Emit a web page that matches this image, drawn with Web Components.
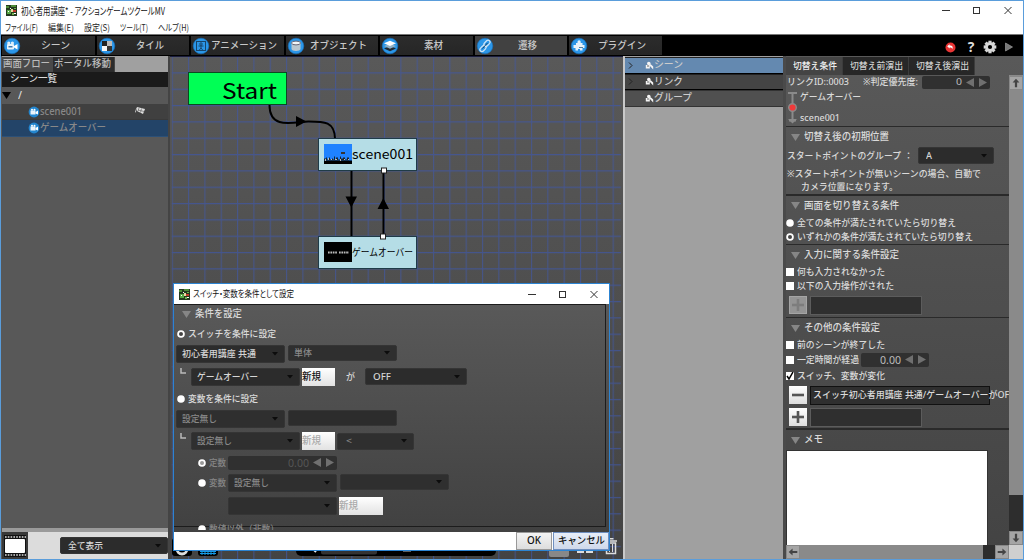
<!DOCTYPE html>
<html lang="ja">
<head>
<meta charset="utf-8">
<title>初心者用講座* - アクションゲームツクールMV</title>
<style>
    html, body { margin: 0; height: 100%; overflow: hidden; }
    body { font: 500 9.3px/1 "Noto Sans", "Noto Sans CJK JP", sans-serif; color: #dcdcdc; }
    .col { display: flex; flex-direction: column; }
    .head { font-size: 9.8px; }
</style>
</head>
<body>

<app-window>
    <title-bar slot="title">
        <fit-label w="144">初心者用講座* - アクションゲームツクールMV</fit-label>
    </title-bar>

    <menu-bar slot="menu">
        <fit-label w="33">ファイル(F)</fit-label>
        <fit-label w="26">編集(E)</fit-label>
        <fit-label w="26">設定(S)</fit-label>
        <fit-label w="28">ツール(T)</fit-label>
        <fit-label w="31">ヘルプ(H)</fit-label>
    </menu-bar>

    <tool-bar slot="tools">
        <tool-tab icon="scene"><fit-label w="29">シーン</fit-label></tool-tab>
        <tool-tab icon="tile"><fit-label w="28">タイル</fit-label></tool-tab>
        <tool-tab icon="anim"><fit-label w="66">アニメーション</fit-label></tool-tab>
        <tool-tab icon="object"><fit-label w="57">オブジェクト</fit-label></tool-tab>
        <tool-tab icon="layers"><fit-label w="19">素材</fit-label></tool-tab>
        <tool-tab icon="link" active><fit-label w="19">遷移</fit-label></tool-tab>
        <tool-tab icon="plugin"><fit-label w="48">プラグイン</fit-label></tool-tab>
    </tool-bar>

    <scene-tree slot="left">
        <fit-label slot="tab1" w="47">画面フロー</fit-label>
        <fit-label slot="tab2" w="57">ポータル移動</fit-label>
        <fit-label slot="head" w="47">シーン一覧</fit-label>
        <tree-row root><fit-label w="4">/</fit-label></tree-row>
        <tree-row flag><fit-label w="42">scene001</fit-label></tree-row>
        <tree-row selected><fit-label w="66">ゲームオーバー</fit-label></tree-row>
        <ui-select slot="filter" style="--w:108px;--h:17px;--pad:7px"><fit-label w="35">全て表示</fit-label></ui-select>
    </scene-tree>

    <flow-canvas slot="canvas">
        <flow-node kind="start" style="left:17.500px;top:16px"><fit-label w="55">Start</fit-label></flow-node>
        <flow-node kind="scene" style="left:148px;top:81.500px"><fit-label w="61">scene001</fit-label></flow-node>
        <flow-node kind="over" style="left:148px;top:179.500px"><fit-label w="61">ゲームオーバー</fit-label></flow-node>
    </flow-canvas>

    <link-list slot="list">
        <link-row selected arrow><fit-label w="29">シーン</fit-label></link-row>
        <link-row arrow><fit-label w="29">リンク</fit-label></link-row>
        <link-row plain><fit-label w="38">グループ</fit-label></link-row>
    </link-list>

    <prop-panel slot="props">
        <fit-label slot="tab1" w="44">切替え条件</fit-label>
        <fit-label slot="tab2" w="53">切替え前演出</fit-label>
        <fit-label slot="tab3" w="53">切替え後演出</fit-label>

        <ui-row h="14">
            <fit-label w="62" style="margin-left:1px">リンクID::0003</fit-label>
            <fit-label w="55" style="margin-left:14px">※判定優先度:</fit-label>
            <ui-spin style="--w:68px;--h:13px;margin-left:4px"><fit-label w="6">0</fit-label></ui-spin>
        </ui-row>
        <ui-row h="37">
            <link-mark></link-mark>
            <div class="col" style="margin-left:3px">
                <ui-row h="21"><fit-label w="61">ゲームオーバー</fit-label></ui-row>
                <ui-row h="21"><fit-label w="40">scene001</fit-label></ui-row>
            </div>
        </ui-row>

        <ui-section line="1" h="20">
            <fit-label slot="head" w="85">切替え後の初期位置</fit-label>
            <ui-row h="17">
                <fit-label w="114" style="margin-left:1px">スタートポイントのグループ</fit-label>
                <fit-label w="9" style="margin-left:3px">：</fit-label>
                <ui-select style="--w:76px;--h:17px;--pad:7px;margin-left:5px"><fit-label w="6">A</fit-label></ui-select>
            </ui-row>
            <ui-row h="4"></ui-row>
            <ui-row h="12"><fit-label w="194" style="margin-left:1px">※スタートポイントが無いシーンの場合、自動で</fit-label></ui-row>
            <ui-row h="14"><fit-label w="97" style="margin-left:15px">カメラ位置になります。</fit-label></ui-row>
        </ui-section>

        <ui-section line="2" h="19">
            <fit-label slot="head" w="95">画面を切り替える条件</fit-label>
            <ui-row h="15"><ui-radio on></ui-radio><fit-label w="159">全ての条件が満たされていたら切り替え</fit-label></ui-row>
            <ui-row h="14"><ui-radio></ui-radio><fit-label w="176">いずれかの条件が満たされていたら切り替え</fit-label></ui-row>
        </ui-section>

        <ui-section line="1" h="20">
            <fit-label slot="head" w="95">入力に関する条件設定</fit-label>
            <ui-row h="13"><ui-check></ui-check><fit-label w="88">何も入力されなかった</fit-label></ui-row>
            <ui-row h="15"><ui-check></ui-check><fit-label w="97">以下の入力操作がされた</fit-label></ui-row>
            <ui-row h="24"><sign-button sign="plus" disabled></sign-button><ui-field style="--w:112px"></ui-field></ui-row>
        </ui-section>

        <ui-section line="1" h="20">
            <fit-label slot="head" w="76">その他の条件設定</fit-label>
            <ui-row h="14"><ui-check></ui-check><fit-label w="88">前のシーンが終了した</fit-label></ui-row>
            <ui-row h="15"><ui-check></ui-check><fit-label w="62">一定時間が経過</fit-label>
                <ui-spin style="--w:68px;--h:14px;margin-left:2px"><fit-label w="21" style="font-size:10px">0.00</fit-label></ui-spin></ui-row>
            <ui-row h="17"><ui-check on></ui-check><fit-label w="88">スイッチ、変数が変化</fit-label></ui-row>
            <ui-row h="22"><sign-button sign="minus"></sign-button><ui-field dark style="--w:180px"><fit-label w="201">スイッチ初心者用講座 共通/ゲームオーバーがOFF</fit-label></ui-field></ui-row>
            <ui-row h="22"><sign-button sign="plus"></sign-button><ui-field style="--w:112px"></ui-field></ui-row>
        </ui-section>

        <ui-section line="2" h="20">
            <fit-label slot="head" w="19">メモ</fit-label>
            <memo-box></memo-box>
        </ui-section>
    </prop-panel>

    <modal-dialog slot="dialog">
        <fit-label slot="title" w="101">スイッチ・変数を条件として設定</fit-label>

        <ui-row h="20"><tri-mark style="margin:0 4px 0 8px"></tri-mark><fit-label class="head" w="47">条件を設定</fit-label></ui-row>
        <ui-row h="20"><ui-radio style="margin-left:3px"></ui-radio><fit-label w="88">スイッチを条件に設定</fit-label></ui-row>
        <ui-row h="20">
            <ui-select style="--w:109px;margin-left:2px"><fit-label w="74">初心者用講座 共通</fit-label></ui-select>
            <ui-select dim style="--w:109px;--h:16px;margin:-2px 0 0 3px"><fit-label w="18">単体</fit-label></ui-select>
        </ui-row>
        <ui-row h="25">
            <corner-mark></corner-mark>
            <ui-select style="--w:109px"><fit-label w="61">ゲームオーバー</fit-label></ui-select>
            <ui-button style="--w:33px"><fit-label w="19">新規</fit-label></ui-button>
            <fit-label w="9" style="margin-left:11px">が</fit-label>
            <ui-select style="--w:102px;--h:17px;--pad:7px;margin-left:10px"><fit-label w="18">OFF</fit-label></ui-select>
        </ui-row>
        <ui-row h="20"><ui-radio on style="margin-left:3px"></ui-radio><fit-label w="70">変数を条件に設定</fit-label></ui-row>
        <ui-row h="20">
            <ui-select dim style="--w:109px;margin-left:2px"><fit-label w="35">設定無し</fit-label></ui-select>
            <ui-select blank style="--w:109px;--h:16px;margin:-2px 0 0 3px"></ui-select>
        </ui-row>
        <ui-row h="24">
            <corner-mark></corner-mark>
            <ui-select dim style="--w:109px"><fit-label w="35">設定無し</fit-label></ui-select>
            <ui-button disabled style="--w:33px"><fit-label w="19">新規</fit-label></ui-button>
            <ui-select dim style="--w:77px;--h:17px;--pad:8px;margin-left:2px"><fit-label w="6">&lt;</fit-label></ui-select>
        </ui-row>
        <ui-row h="19">
            <ui-radio half style="margin-left:24px"></ui-radio><fit-label w="17" style="color:#858585">定数</fit-label>
            <ui-spin dim style="--w:109px;--h:14px;margin-left:2px"><fit-label w="21" style="font-size:10px">0.00</fit-label></ui-spin>
        </ui-row>
        <ui-row h="22">
            <ui-radio on style="margin-left:24px"></ui-radio><fit-label w="17" style="color:#858585">変数</fit-label>
            <ui-select dim style="--w:109px;margin-left:2px"><fit-label w="35">設定無し</fit-label></ui-select>
            <ui-select dim style="--w:109px;--h:16px;margin:-2px 0 0 3px"></ui-select>
        </ui-row>
        <ui-row h="24">
            <ui-select dim style="--w:109px;margin-left:54px"></ui-select>
            <ui-button disabled style="--w:44px"><fit-label w="19">新規</fit-label></ui-button>
        </ui-row>
        <ui-row h="22"><ui-radio on style="margin-left:24px"></ui-radio><fit-label w="70" style="color:#858585">数値以外（非数）</fit-label></ui-row>

        <dialog-button slot="actions" style="--w:36px"><fit-label w="14">OK</fit-label></dialog-button>
        <dialog-button slot="actions" focused style="--w:56px"><fit-label w="47">キャンセル</fit-label></dialog-button>
    </modal-dialog>
</app-window>

<script>
    // Registers an element whose shadow root is cloned from one template
    function define(name, html, ready) {
        const template = document.createElement("template");
        template.innerHTML = html;
        customElements.define(name, class extends HTMLElement {
            constructor() {
                super();
                this.attachShadow({mode: "open"});
                this.shadowRoot.append(template.content.cloneNode(true));
            }
            connectedCallback() {
                if (ready) ready(this, this.shadowRoot);
            }
        });
    }

    const appIcon = `
        <svg width="11" height="11" viewBox="0 0 11 11">
            <rect width="11" height="11" fill="#24391f"/>
            <path d="M0 1h3v2h-3zM5 0h5v2h-5z" fill="#4d8c37"/>
            <path d="M1 5h4v4h-4z" fill="#58a845"/><path d="M5 4h2v3h-2z" fill="#e8d9a0"/>
            <path d="M7 5h3v2h-3z" fill="#c33c2e"/><path d="M4 3h1v1h-1zM2 6h1v1h-1zM8 8h2v1h-2z" fill="#fff"/>
            <path d="M6 8h2v2h-2zM8 3h2v1h-2z" fill="#6fb34c"/>
        </svg>`;

    const windowButtons = `
        <svg class="btns" width="71" height="9" viewBox="0 0 71 9" fill="none" stroke="#333" stroke-width="1">
            <path d="M0 4.500h8"/><rect x="31.500" y="1.500" width="6" height="6"/><path d="M62.500 1l7 7M69.500 1l-7 7"/>
        </svg>`;

    /* ---------- text ---------- */

    // One line of text squeezed or stretched to the width in [w]
    define("fit-label", `
        <style>
            :host { display: inline-block; flex: none; height: 14px; line-height: 14px; white-space: nowrap; }
            span { display: inline-block; transform-origin: 0 50%; line-height: 14px; vertical-align: top; }
        </style>
        <span><slot></slot></span>
    `, (el, root) => {
        const w = Number(el.getAttribute("w"));
        const span = root.querySelector("span");
        el.style.width = `${w}px`;
        const fit = () => {
            span.style.transform = "";
            const natural = span.getBoundingClientRect().width;
            if (natural) span.style.transform = `scaleX(${w / natural})`;
        };
        fit();
        root.querySelector("slot").addEventListener("slotchange", fit);
        window.addEventListener("load", fit);
    });

    /* ---------- window frame ---------- */

    define("app-window", `
        <style>
            :host {
                display: grid; box-sizing: border-box; width: 1024px; height: 560px;
                grid-template-rows: 20px 13px 22px 1fr;
                border: 1px solid #5a9ddb; background: #fff; position: relative; overflow: hidden;
            }
            .main {
                display: grid; grid-template-columns: 169px 453px 163px 1fr;
                min-height: 0; background: #474747;
            }
        </style>
        <slot name="title"></slot>
        <slot name="menu"></slot>
        <slot name="tools"></slot>
        <div class="main">
            <slot name="left"></slot>
            <slot name="canvas"></slot>
            <slot name="list"></slot>
            <slot name="props"></slot>
        </div>
        <slot name="dialog"></slot>
    `);

    define("title-bar", `
        <style>
            :host { display: flex; align-items: center; padding: 0 10px 1px 5px; color: #111; font: 10px "Noto Sans CJK JP", sans-serif; font-feature-settings: "palt"; }
            .t { margin-left: 4px; flex: 1; }
        </style>
        ${appIcon}<div class="t"><slot></slot></div>${windowButtons}
    `);

    define("menu-bar", `
        <style>
            :host { display: flex; gap: 10px; align-items: center; padding-left: 4px; color: #222; font: 9px "Noto Sans CJK JP", sans-serif; font-feature-settings: "palt"; }
        </style>
        <slot></slot>
    `);

    define("tool-bar", `
        <style>
            :host { display: flex; align-items: center; gap: 2px; background: #000; padding-left: 1px; border-top: 1px solid #777; box-sizing: border-box; }
            .right { margin-left: auto; margin-top: 3px; display: flex; align-items: center; padding-right: 9px; }
            b { font: bold 14px/14px "Open Sans", sans-serif; color: #ddd; margin: 0 8px 0 11px; width: 8px; text-align: center; }
        </style>
        <slot></slot>
        <div class="right">
            <svg width="11" height="11" viewBox="0 0 11 11">
                <circle cx="5.500" cy="5.500" r="5" fill="#e93434"/>
                <path d="M2.200 4.200l2.400-2v1.300c2.800 0 3.800 1.400 2.600 3.800 0-1.600-.9-2-2.600-1.900v1.200z" fill="#fff"/>
            </svg>
            <b>?</b>
            <svg width="14" height="14" viewBox="-7 -7 14 14">
                <g fill="#d8d8d8">
                    <circle r="4.800"/>
                    <rect x="-1.600" y="-6.300" width="3.200" height="12.600"/><rect x="-6.300" y="-1.600" width="12.600" height="3.200"/>
                    <rect x="-1.600" y="-6.300" width="3.200" height="12.600" transform="rotate(45)"/>
                    <rect x="-1.600" y="-6.300" width="3.200" height="12.600" transform="rotate(-45)"/>
                </g>
                <circle r="2.100" fill="#000"/>
            </svg>
            <svg width="10" height="10" viewBox="0 0 10 10" style="margin-left:7px">
                <path d="M1.500 1v8l7-4z" fill="#777" stroke="#999" stroke-width=".7"/>
            </svg>
        </div>
    `);

    const toolIcons = {
        scene: `<rect x="3" y="6" width="7" height="5.500" rx="1" fill="#e9f4fc"/><path d="M10 8l3.500-2v5.500l-3.500-2z" fill="#fff"/><circle cx="4.800" cy="5" r="1.600" fill="#dceefa"/><circle cx="8.400" cy="5" r="1.600" fill="#dceefa"/><path d="M4.500 8h4v1.500h-4z" fill="#3c7bb0"/>`,
        tile: `<rect x="3" y="3" width="5" height="5" fill="#222"/><rect x="8" y="3" width="5" height="5" fill="#bbb"/><rect x="3" y="8" width="5" height="5" fill="#f6f6f6"/><rect x="8" y="8" width="5" height="5" fill="#333"/>`,
        anim: `<g fill="none" stroke="#17456b"><rect x="3.500" y="3.500" width="9" height="9"/><circle cx="8" cy="6" r="1.200"/><path d="M8 7v3M5.500 8h5M8 10l-2 2.500M8 10l2 2.500"/></g>`,
        object: `<path d="M3.500 5v6c0 2.600 9 2.600 9 0v-6z" fill="#b9c7d0"/><ellipse cx="8" cy="5" rx="4.500" ry="1.900" fill="#f1f6f8" stroke="#667"/>`,
        layers: `<path d="M8 8l6 2.500-6 2.700-6-2.700z" fill="#222b33"/><path d="M8 5.500l6 2.500-6 2.700-6-2.700z" fill="#8fb0c6"/><path d="M8 2.700l6 2.500-6 2.700-6-2.700z" fill="#fff"/>`,
        link: `<g fill="none" stroke="#cfe4f5" stroke-width="1.300"><rect x="6.500" y="3.300" width="7" height="4" rx="2" transform="rotate(-45 10 5.300)"/><rect x="2.500" y="8.500" width="7" height="4" rx="2" transform="rotate(-45 6 10.500)"/></g><path d="M5.500 10.500l5-5.500" stroke="#17456b"/>`,
        plugin: `<path d="M2.500 7h2.500v-2h1.500v-1.200a1.600 1.600 0 0 1 3.200 0v1.200h1.800v2h2v3h-2v2.500h-2.500v-1.500h-2v1.500h-2.500v-2.500h-2z" fill="#e6f1fa"/><path d="M8 9h4v1h-4z" fill="#557c99"/>`
    };

    define("tool-tab", `
        <style>
            :host {
                display: flex; align-items: center; box-sizing: border-box; width: 92.500px; height: 19px; padding-left: 1px;
                background: linear-gradient(#2c2c2c, #262626); color: #c8c8c8; font-size: 9.800px;
            }
            :host([active]) { background: #414141; }
            svg { flex: none; }
            div { flex: 1; display: flex; justify-content: center; padding-right: 5px; }
        </style>
        <svg width="18" height="18" viewBox="-1 -1 18 18"></svg>
        <div><slot></slot></div>
    `, (el, root) => {
        root.querySelector("svg").innerHTML =
            `<circle cx="8" cy="8" r="7.800" fill="#2b96e8" stroke="#1670bd" stroke-width=".6"/>${toolIcons[el.getAttribute("icon")]}`;
    });

    /* ---------- scene tree ---------- */

    define("scene-tree", `
        <style>
            :host { display: flex; flex-direction: column; border-right: 2px solid #444; padding-left: 1px; background: #585858; min-height: 0; }
            .tabs { display: flex; background: #a0a0a0; height: 15px; padding-top: 1px; font-size: 9.800px; color: #bbb; }
            .tabs div { box-sizing: border-box; padding-left: 1px; }
            .t1 { width: 51px; background: #4a4a4a; }
            .t2 { width: 62px; background: #2c2c2c; border-right: 1px solid #444; }
            .head { height: 15px; background: #1a1a1a; padding-left: 8px; font-size: 9.800px; }
            .body { flex: 1; }
            .foot { height: 27px; display: flex; border-top: 4px solid #9a9a9a; background: #dcdcdc; align-items: center; justify-content: space-between; }
            .film { align-self: stretch; width: 26px; background: #383838; display: grid; place-items: center; }
        </style>
        <div class="tabs">
            <div class="t1"><slot name="tab1"></slot></div>
            <div class="t2"><slot name="tab2"></slot></div>
        </div>
        <div class="head"><slot name="head"></slot></div>
        <div class="body"><slot></slot></div>
        <div class="foot">
            <div class="film">
                <svg width="24" height="24" viewBox="0 0 24 24">
                    <rect x="1" y="1" width="22" height="22" fill="#111"/>
                    <rect x="2" y="5" width="20" height="14" rx="1" fill="#fff"/>
                    <path d="M2 3h21M2 21h21" stroke="#ddd" stroke-width="1.500" stroke-dasharray="1.600 1.200"/>
                </svg>
            </div>
            <slot name="filter"></slot>
        </div>
    `);

    define("tree-row", `
        <style>
            :host { display: flex; align-items: center; height: 16px; box-sizing: border-box; padding-left: 26px; background: #404040; color: #888; font-size: 9.800px; border-bottom: 1px solid #3a3a3a; }
            :host([root]) { background: #585858; border: 0; padding-left: 0; height: 17px; color: #ddd; }
            :host([selected]) { background: #234468; height: 17px; border-color: #2c5077; }
            .tri, .flag, :host([root]) .ball { display: none; }
            :host([root]) .tri { display: block; margin-right: 7px; }
            :host([flag]) .flag { display: block; margin: -3px 0 0 53px; }
        </style>
        <svg class="tri" width="9" height="7"><path d="M0 0h9l-4.500 7z" fill="#000"/></svg>
        <svg class="ball" width="12" height="12" viewBox="0 0 12 12">
            <circle cx="6" cy="6" r="5.400" fill="#2386cf"/>
            <rect x="2.500" y="4.500" width="5" height="4" fill="#eaf4fb"/><path d="M7.500 6l2.500-1.500v4l-2.500-1z" fill="#fff"/>
            <circle cx="4" cy="3.700" r="1" fill="#fff"/><circle cx="6.500" cy="3.700" r="1" fill="#fff"/>
        </svg>
        <slot></slot>
        <svg class="flag" width="10" height="9" viewBox="0 0 10 9">
            <path d="M2 1l8 2-2 5-6-3z" fill="#ddd"/><path d="M4 2l-1 3M6.500 2.500l-1 4M3 4l6 1.500" stroke="#555" stroke-width=".6"/>
            <path d="M2 1.500l-1.800 5" stroke="#bbb"/>
        </svg>
    `);

    /* ---------- flow canvas ---------- */

    define("flow-canvas", `
        <style>
            :host { display: block; position: relative; overflow: hidden; background: linear-gradient(#595959, #434343); }
            svg { position: absolute; left: 0; top: 0; }
        </style>
        <svg width="453" height="503" viewBox="170 56 453 503">
            <defs>
                <pattern id="grid" x="171.700" y="56" width="16.330" height="16.330" patternUnits="userSpaceOnUse">
                    <path d="M.6 0v16.330M0 .6h16.330" stroke="#4057a3" stroke-width="1" fill="none" opacity=".75"/>
                </pattern>
            </defs>
            <rect x="171.700" y="56" width="449" height="503" fill="url(#grid)"/>
            <path d="M170 56.500h453" stroke="#1b1d3c"/>
            <g fill="none" stroke="#000" stroke-width="2">
                <path d="M269.500 105c0 26 26 16.500 39 16.500c16 0 26 0 26.500 17"/>
                <path d="M351.500 170v66M383.500 170v66"/>
            </g>
            <path d="M296 116l10.500 5.500-10.500 5.500zM345.500 196.500h11.500l-5.700 11zM377.500 209h11.500l-5.700-11z"/>
            <g>
                <rect x="172" y="538" width="20" height="18" rx="3"/>
                <circle cx="182" cy="549" r="5" fill="none" stroke="#ddd" stroke-width="3"/>
                <rect x="198" y="538" width="20" height="18" rx="3"/>
                <path d="M200 551.500h16M200 553.500h16M202 546v9M205 546v9M208 546v9M211 546v9M214 546v9" stroke="#159be8"/>
                <rect x="296" y="538" width="200" height="18" rx="5"/>
                <rect x="321" y="542" width="56" height="12.500" rx="2" fill="#333"/>
                <path d="M311 547l5 5" stroke="#eee" stroke-width="2"/>
                <path d="M403 551h8" stroke="#bbb"/>
                <rect x="549" y="538" width="20" height="19" rx="2" fill="#888"/>
                <path d="M577 552h7M586 552h7" stroke="#ddd" stroke-width="2"/>
                <path d="M605.500 541h11.500M609 538.800h4.500" stroke="#ddd" stroke-width="1.500"/>
                <path d="M606.500 543h9v10.500h-9z" fill="none" stroke="#ddd" stroke-width="1.500"/>
                <path d="M609.500 544v8M612.500 544v8" stroke="#ddd"/>
            </g>
        </svg>
        <slot></slot>
        <svg width="453" height="503" viewBox="170 56 453 503" fill="#fff" stroke="#222">
            <rect x="381.500" y="168" width="5" height="5"/><rect x="380.500" y="234" width="5" height="5"/>
        </svg>
    `);

    define("flow-node", `
        <style>
            :host {
                position: absolute; display: flex; align-items: center; box-sizing: border-box; width: 99px; height: 33px;
                padding-left: 5px; background: #b5dde6; border: 1px solid #1f3b48; color: #000;
                font: 13px "Noto Sans CJK JP", sans-serif;
            }
            :host([kind=start]) { background: #00ff55; border-color: #0a4a20; padding-left: 33px; font-size: 22px; }
            :host([kind=over]) { font-size: 10px; }
            svg { flex: none; display: none; }
            :host([kind=scene]) .scene, :host([kind=over]) .over { display: block; }
        </style>
        <svg class="scene" width="28" height="20" viewBox="0 0 28 20">
            <rect width="28" height="20" fill="#1f82ff"/><rect y="16.500" width="28" height="3.500"/>
            <path d="M0 16.500v-2h2v-1h1v2h2v-2h1v2h2v-1h1v1h1v-3h1v3h1v-2h2v2h2v-3h1v2h2v-1h2v2h2v-2h2v3z" fill="#16232d"/>
            <path d="M1 15h1v2h-1zM4 14h1v2h-1zM7 15h1v1h-1zM11 15h2v1h-2zM16 15h1v2h-1zM20 15h1v1h-1zM24 15h1v1h-1z" fill="#bbb"/>
            <path d="M17 8h4v2h-4z" fill="#333"/>
        </svg>
        <svg class="over" width="28" height="20" viewBox="0 0 28 20">
            <rect width="28" height="20"/>
            <path d="M4 10.500h9M15 10.500h10" stroke="#bbb" stroke-width="2" stroke-dasharray="1.700 .7"/>
        </svg>
        <slot></slot>
    `);

    /* ---------- link list ---------- */

    define("link-list", `
        <style>
            :host { display: flex; flex-direction: column; padding-top: 1px; background: #a0a0a0; border-left: 2px solid #c9c9c9; border-right: 3px solid #4a4a4a; }
        </style>
        <slot></slot>
    `);

    define("link-row", `
        <style>
            :host { display: flex; align-items: center; box-sizing: border-box; height: 16.500px; background: #444; color: #ccc; border-top: 1px solid #222; border-bottom: 1px solid #000; font-size: 9.800px; }
            :host([selected]) { background: #6489b0; }
            :host([plain]) { background: #505050; border-color: #333; }
            .arrow { margin: 0 12px 0 3px; visibility: hidden; }
            :host([arrow]) .arrow { visibility: visible; }
        </style>
        <svg class="arrow" width="5" height="7" viewBox="0 0 5 7"><path d="M1 .5l3 3-3 3" fill="none" stroke="#222"/></svg>
        <svg width="9" height="9" viewBox="0 0 9 9">
            <path d="M.8 4h4v3.500h-4zM4.500 4.500l3.700 4v-3l-2.700-2.500z" fill="#f4f4f4"/><circle cx="3.800" cy="2.500" r="1.800" fill="#f4f4f4"/><path d="M2 5h2" stroke="#444" stroke-width=".8"/>
        </svg>
        <slot></slot>
    `);

    /* ---------- property panel ---------- */

    define("prop-panel", `
        <style>
            :host {
                display: grid; min-height: 0; background: linear-gradient(#595959, #434343);
                grid-template: 19px 470px 14px / 223px 14px;
                color: #dadada;
            }
            .tabs { grid-column: 1 / 3; display: flex; padding-top: 1px; color: #ccc; }
            .tabs div { box-sizing: border-box; height: 18px; padding: 2px 0 0 7px; background: #272727; border-right: 1px solid #3c3c3c; }
            .content { overflow: hidden; }
        </style>
        <div class="tabs">
            <div style="width:57px;background:#444;color:#eee"><slot name="tab1"></slot></div>
            <div style="width:66px"><slot name="tab2"></slot></div>
            <div style="width:66px"><slot name="tab3"></slot></div>
        </div>
        <div class="content"><slot></slot></div>
        <scroll-bar vertical></scroll-bar>
        <scroll-bar></scroll-bar>
        <div style="background:#cfcfcf"></div>
    `);

    define("scroll-bar", `
        <style>
            :host { display: flex; background: #8a8a8a; }
            :host([vertical]) { flex-direction: column; padding-top: 1px; box-sizing: border-box; }
            svg { flex: none; background: #a5a5a5; width: 14px; height: 14px; box-sizing: border-box; border: 1px solid #888; }
            .track { flex: 1; }
            .thumb { flex: none; width: 12px; background: #2d2d2d; }
            :host([vertical]) .thumb { width: auto; height: 36px; }
            :host(:not([vertical])) svg { transform: rotate(-90deg); }
        </style>
        <svg viewBox="0 0 14 14"><path d="M7 2l4 4.500h-2.700v5.500h-2.600v-5.500h-2.700z" fill="#444"/></svg>
        <div class="track"></div>
        <div class="thumb"></div>
        <svg viewBox="0 0 14 14"><path d="M7 12l4-4.500h-2.700v-5.500h-2.600v5.500h-2.700z" fill="#444"/></svg>
    `);

    define("ui-row", `
        <style>:host { display: flex; align-items: center; }</style>
        <slot></slot>
    `, (el) => {
        el.style.height = `${el.getAttribute("h")}px`;
    });

    define("tri-mark", `
        <style>:host { display: block; width: 9px; height: 7px; } svg { display: block; }</style>
        <svg width="9" height="7"><path d="M0 0h9l-4.500 7z" fill="#868686"/></svg>
    `);

    define("ui-section", `
        <style>
            :host { display: block; border-top: 0 solid #2a2a2a; }
            .head { display: flex; align-items: center; gap: 4px; padding-left: 5px; font-size: 9.800px; }
        </style>
        <div class="head"><tri-mark></tri-mark><slot name="head"></slot></div>
        <slot></slot>
    `, (el, root) => {
        el.style.borderTopWidth = `${el.getAttribute("line")}px`;
        root.querySelector(".head").style.height = `${el.getAttribute("h")}px`;
    });

    define("link-mark", `
        <style>:host { display: block; margin-left: 2px; } svg { display: block; }</style>
        <svg width="9" height="32" viewBox="0 0 9 32">
            <path d="M0 1h9M4.500 1v27M1 28.500h7" stroke="#8a8a8a" stroke-width="2"/><path d="M0 27h9l-4.500 4.500z" fill="#8a8a8a"/>
            <circle cx="4.500" cy="15.500" r="3.800" fill="#f03a3a" stroke="#8a8a8a" stroke-width="1.400"/>
        </svg>
    `);

    /* ---------- form controls ---------- */

    define("ui-select", `
        <style>
            :host {
                display: flex; align-items: center; flex: none; box-sizing: border-box;
                width: var(--w, 109px); height: var(--h, 18px); padding: 0 6px 0 var(--pad, 5px);
                background: #2c2c2c; border: 1px solid #353535; border-radius: 2px; color: #d6d6d6;
            }
            :host([dim]) { color: #888; background: #2f2f2f; }
            :host([blank]) svg { display: none; }
            svg { margin-left: auto; }
        </style>
        <slot></slot>
        <svg width="6" height="4"><path d="M0 0h6l-3 3.500z" fill="#0c0c0c"/></svg>
    `);

    define("ui-spin", `
        <style>
            :host {
                display: flex; align-items: center; justify-content: flex-end; gap: 4px; flex: none; box-sizing: border-box;
                width: var(--w); height: var(--h); padding-right: 3px; background: #303030; border-radius: 2px; color: #bbb; font-weight: 400;
            }
            :host([dim]) { color: #555; }
        </style>
        <slot></slot>
        <svg width="21" height="9" viewBox="0 0 21 9" fill="#707070"><path d="M8 0v9l-8-4.500zM13 0v9l8-4.500z"/></svg>
    `);

    define("ui-radio", `
        <style>:host { display: block; flex: none; width: 11px; height: 8px; } svg { display: block; }</style>
        <svg width="8" height="8" viewBox="0 0 8 8"><circle cx="4" cy="4" r="3.800" fill="#fff"/><circle class="dot" cx="4" cy="4" r="2" fill="#444"/></svg>
    `, (el, root) => {
        const dot = root.querySelector(".dot");
        if (el.hasAttribute("on")) dot.remove();
        if (el.hasAttribute("half")) dot.setAttribute("fill", "#999");
    });

    define("ui-check", `
        <style>
            :host { display: block; flex: none; width: 11px; height: 8px; }
            svg { display: block; } path { display: none; }
            :host([on]) path { display: block; }
        </style>
        <svg width="8" height="8" viewBox="0 0 8 8"><rect width="8" height="8" fill="#fff"/><path d="M1 4l2 3 4-7" fill="none" stroke="#000" stroke-width="1.500"/></svg>
    `);

    define("ui-field", `
        <style>
            :host { display: flex; align-items: center; flex: none; box-sizing: border-box; margin-left: 3px; width: var(--w); height: 19px; padding-left: 2px; background: #2f2f2f; border: 1px solid #5c5c5c; }
            :host([dark]) { border-color: #111; }
        </style>
        <slot></slot>
    `);

    define("sign-button", `
        <style>
            :host { display: grid; place-items: center; flex: none; box-sizing: border-box; width: 18px; height: 18px; margin-left: 3px; background: linear-gradient(#fff, #ddd); }
            :host([disabled]) { background: #949494; border: 1px solid #a5a5a5; }
            :host([disabled]) svg { opacity: .35; }
            :host([sign=minus]) .v { display: none; }
        </style>
        <svg width="12" height="12" viewBox="0 0 12 12" stroke="#555" stroke-width="2.600"><path d="M0 6h12"/><path class="v" d="M6 0v12"/></svg>
    `);

    define("memo-box", `
        <style>:host { display: block; box-sizing: border-box; width: 202px; height: 95px; background: #fff; border: 1px solid #333; border-bottom: 0; }</style>
    `);

    define("corner-mark", `
        <style>:host { display: block; flex: none; width: 11px; height: 17px; margin-left: 6px; } svg { display: block; }</style>
        <svg width="7" height="7"><path d="M1 0v5h5" fill="none" stroke="#bbb" stroke-width="1.500"/></svg>
    `);

    define("ui-button", `
        <style>
            :host { display: flex; align-items: center; flex: none; box-sizing: border-box; width: var(--w); height: 18px; margin-left: 2px; background: linear-gradient(#fff, #e2e2e2); color: #111; font-size: 9.800px; }
            :host([disabled]) { color: #aaa; }
        </style>
        <slot></slot>
    `);

    /* ---------- dialog ---------- */

    define("modal-dialog", `
        <style>
            :host {
                position: absolute; left: 172px; top: 282px; width: 437px; height: 268px; box-sizing: border-box;
                display: flex; flex-direction: column; border: 1px solid #2c84d2; background: #fff; color: #dadada;
            }
            .title { height: 20px; display: flex; align-items: center; padding: 0 10px 0 5px; color: #111; font: 9px "Noto Sans CJK JP", sans-serif; font-feature-settings: "palt"; box-sizing: border-box; }
            .title slot { display: block; margin-left: 3px; flex: 1; }
            .body { height: 228px; box-sizing: border-box; padding-right: 3px; background: linear-gradient(#595959, #414141); overflow: hidden; }
            .frame { height: 223px; box-sizing: border-box; border: solid #1c1c1c; border-width: 1px 1px 1px 0; }
            /* the last row runs over the frame line and is cut just below it */
            .rows { margin-top: -1px; height: 226px; overflow: hidden; }
            .foot { flex: 1; display: flex; justify-content: flex-end; gap: 1px; color: #111; }
        </style>
        <div class="title">${appIcon}<slot name="title"></slot>${windowButtons}</div>
        <div class="body"><div class="frame"><div class="rows"><slot></slot></div></div></div>
        <div class="foot"><slot name="actions"></slot></div>
    `);

    define("dialog-button", `
        <style>
            :host { display: grid; place-items: center; box-sizing: border-box; width: var(--w); height: 18px; background: linear-gradient(#f4f4f4, #ddd); border: 1px solid #999; font-size: 9.800px; }
            :host([focused]) { background: linear-gradient(#e8eef8, #cfd8ea); border-color: #6f8fc0; }
        </style>
        <slot></slot>
    `);
</script>
</body>
</html>
